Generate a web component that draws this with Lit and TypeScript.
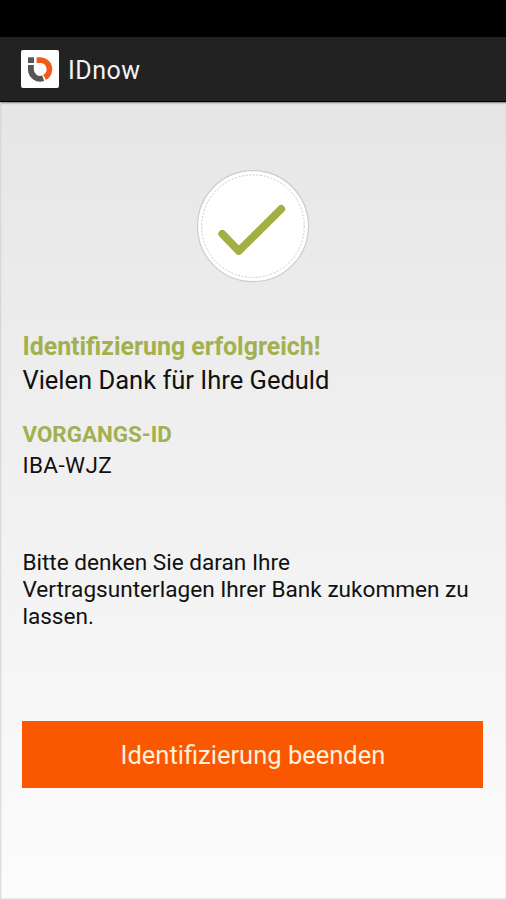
import { LitElement, html, css } from "lit";
import { customElement } from "lit/decorators.js";

@customElement("app-root")
export class AppRoot extends LitElement {
  static styles = css`
    :host {
      display: flex;
      flex-direction: column;
      width: 100%;
      height: 900px;
      overflow: hidden;
      box-sizing: border-box;
      font-family: Roboto, "Liberation Sans", sans-serif;
      color: #111;
    }
    .status {
      flex: none;
      height: 37px;
      background: #000;
    }
    .bar {
      flex: none;
      display: flex;
      align-items: center;
      box-sizing: border-box;
      height: 65px;
      padding-left: 21px;
      background: #222;
      border-bottom: 1px solid #000;
      color: #f3f3f3;
    }
    .logo {
      display: block;
      width: 38px;
      height: 38px;
    }
    .name {
      margin-left: 9px;
      font-size: 25px;
      line-height: 30px;
      letter-spacing: 0.5px;
      padding-top: 3px;
    }
    main {
      flex: 1;
      display: flex;
      flex-direction: column;
      box-sizing: border-box;
      padding: 68px 22.6px 0 22.4px;
      background: linear-gradient(#e6e6e6, #f0f0f0 45%, #fcfcfc);
      box-shadow: inset 2px 0 2px -1px #d4d4d4, inset 0 2px 2px -1px #777, inset 0 -2px 2px -1px #ccc;
    }
    .check {
      display: block;
      align-self: center;
      width: 114px;
      height: 114px;
      margin-top: -1px;
    }
    h1, h2, p {
      margin: 0;
      font-weight: 400;
      white-space: nowrap;
    }
    h1 {
      margin-top: 47px;
      font-size: 24.9px;
      line-height: 34px;
    }
    .thanks {
      font-size: 25.5px;
      line-height: 32px;
    }
    h1, h2 {
      color: #a3b04f;
      font-weight: 700;
    }
    h2 {
      margin-top: 23px;
      font-size: 22.4px;
      line-height: 30px;
    }
    .code {
      font-size: 22.5px;
      line-height: 32px;
      letter-spacing: 0.4px;
    }
    .note {
      margin-top: 69.3px;
      font-size: 22.6px;
      line-height: 26.7px;
    }
    button {
      flex: none;
      height: 67px;
      margin: 90.6px 0 0;
      padding: 1px 0 0;
      border: 0;
      background: #fa5800;
      color: #fff0dc;
      font: 400 25.5px/30px Roboto, "Liberation Sans", sans-serif;
    }
  `;

  render() {
    return html`
      <div class="status"></div>
      <header class="bar">
        <svg class="logo" viewBox="0 0 38 38">
          <rect width="38" height="38" rx="2" fill="#fff" />
          <rect x="7" y="7.3" width="6" height="5.7" fill="#555" />
          <path d="M9.9 14.9V19.5A9.3 9.3 0 0 0 22.2 28.3" fill="none" stroke="#555" stroke-width="5.8" />
          <path d="M15.6 10.1H19.3A9.2 9.2 0 0 1 23.6 27.4" fill="none" stroke="#f05a1a" stroke-width="5.8" />
        </svg>
        <span class="name">IDnow</span>
      </header>
      <main>
        <svg class="check" viewBox="0 0 114 114">
          <circle cx="57" cy="57.2" r="55.5" fill="#fff" stroke="#cfcdc0" stroke-width="1.2" />
          <circle cx="57" cy="57.2" r="51.3" fill="none" stroke="#cbc9c0" stroke-width="1" stroke-dasharray="2 1.6" />
          <path d="M26.2 64.8L42.8 82L85.2 40" fill="none" stroke="#a3af43" stroke-width="7.8" stroke-linecap="round" stroke-linejoin="round" />
        </svg>
        <h1>Identifizierung erfolgreich!</h1>
        <p class="thanks">Vielen Dank für Ihre Geduld</p>
        <h2>VORGANGS-ID</h2>
        <p class="code">IBA-WJZ</p>
        <p class="note">Bitte denken Sie daran Ihre<br />Vertragsunterlagen Ihrer Bank zukommen zu<br />lassen.</p>
        <button>Identifizierung beenden</button>
      </main>
    `;
  }
}
